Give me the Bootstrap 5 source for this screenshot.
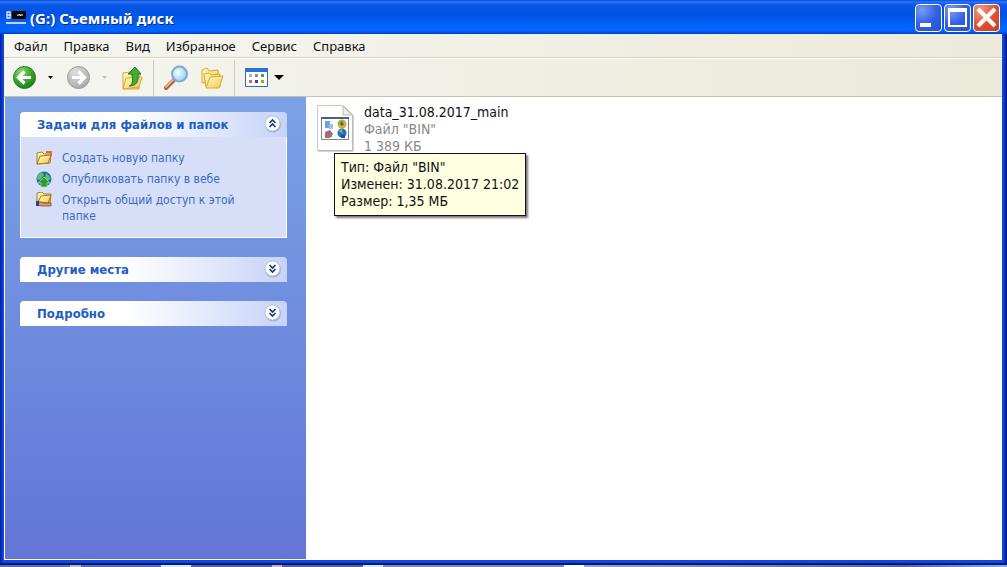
<!DOCTYPE html>
<html lang="ru">
<head>
<meta charset="utf-8">
<meta name="viewport" content="width=device-width, initial-scale=1">
<title>(G:) Съемный диск</title>
<link href="https://cdn.jsdelivr.net/npm/bootstrap@5.3.0/dist/css/bootstrap.min.css" rel="stylesheet">
<style>
body{font-family:"DejaVu Sans Condensed","DejaVu Sans",sans-serif;font-stretch:condensed;font-size:14px;line-height:17px;color:#111;background:linear-gradient(90deg,#646a9c 0 7%,#c4b8b0 7% 8%,#646a9c 8% 16%,#d8e6fa 16% 19%,#625f8b 19% 27%,#c4b8b0 27% 28%,#625f8b 28% 36%,#d8e6fa 36% 38%,#8c84a8 38% 56%,#fff 56% 58%,#a8a0bc 58%,#625f8b 90%,#8caedc)}
button{border:0;padding:0;background:none;color:inherit}
svg{display:block;flex:none}
.window-frame{background:linear-gradient(90deg,#001c9c 0,#1048dc 3px,#1048dc calc(100% - 4px),#001880 100%);border-bottom:2px solid #00188e;padding:0 5px 3px 4px;margin-bottom:2px}
.titlebar{height:34px;margin:0 -5px 0 -4px;padding:2px 7px 0 6px;background:linear-gradient(#0a4bdc 0,#2a76f4 2px,#0855e6 5px,#0054e4 16px,#0263fb 26px,#0366fe 31px,#003ccb 34px)}
.titlebar h1{font:bold 15px/22px "Noto Sans",sans-serif;color:#fff;text-shadow:1px 1px #0a2a8c}
.caption-group{gap:2px}
.caption-btn{width:27px;height:28px;border:1px solid #fff;border-radius:4px;background:radial-gradient(circle at 25% 20%,#7a9cf4,#3460e4 50%,#2450d0)}
.caption-btn.close-win{background:radial-gradient(circle at 25% 20%,#f09a80,#dd5030 55%,#c84020)}
.menubar{height:24px;background:linear-gradient(90deg,#f6f6f2,#eceada);border-bottom:1px solid #d6d2c0;padding-left:10px}
.menubar button{font:13px/22px "Noto Sans",sans-serif}
.toolbar{height:39px;background:linear-gradient(90deg,#f5f5f0,#ebe9d8);border-top:1px solid #fff;border-bottom:1px solid #c5c2b2;padding-left:8px}
.tool-sep{width:1px;height:36px;background:#cfccba;margin:0 9px}
.explorer{min-height:calc(100vh - 104px)}
.tasks{width:302px;background:linear-gradient(#7ba2e7,#6375d6);border-left:1px solid #fff;border-bottom:1px solid #fff;padding:15px 19px 15px 15px}
.task-head{width:100%;height:25px;border-radius:4px 4px 0 0;background:linear-gradient(90deg,#fff 40%,#c6d3f7);color:#215dc6;font-size:13px;font-weight:bold;padding:0 5px 0 17px}
.task-group + .task-group{margin-top:19px}
.task-head svg{margin-bottom:2px}
.task-list{background:#d6dff7;border:1px solid #fff;border-top:0;padding:13px 15px 13px;font-size:12px;line-height:16px}
.task-list a{color:#386ac6}
.files{padding:7px 10px}
.file-entry{gap:10px}
.file-meta{color:#888}
.file-tip{position:absolute;top:49px;left:18px;background:#ffffe1;border:1px solid #111;box-shadow:2px 2px 2px #777;padding:5px 6px;white-space:nowrap;color:#111}
</style>
</head>
<body>
<svg width="0" height="0" class="position-absolute" aria-hidden="true">
<defs>
<radialGradient id="green" cx=".35" cy=".25" r=".8"><stop stop-color="#8cdc78"/><stop offset=".55" stop-color="#3ea52c"/><stop offset="1" stop-color="#1f7c18"/></radialGradient>
<radialGradient id="grey" cx=".35" cy=".25" r=".8"><stop stop-color="#dedede"/><stop offset="1" stop-color="#a9a9a9"/></radialGradient>
<linearGradient id="yellow" x2="1" y2="1"><stop stop-color="#fffbc4"/><stop offset="1" stop-color="#f1ca52"/></linearGradient>
<radialGradient id="glass" cx=".4" cy=".4"><stop stop-color="#fafeff"/><stop offset="1" stop-color="#a5d8f8"/></radialGradient>
<symbol id="disc" viewBox="0 0 18 20"><circle cx="9" cy="10.500" r="8" fill="#7f92c8" opacity=".6"/><circle cx="8.500" cy="9.500" r="7.500" fill="#fff" stroke="#b8c2dc"/></symbol>
<symbol id="chev-down" viewBox="0 0 18 20"><use href="#disc"/><path d="M5.500 6l3 3 3-3M5.500 10l3 3 3-3" fill="none" stroke="#173a78" stroke-width="1.700"/></symbol>
<symbol id="chev-up" viewBox="0 0 18 20"><use href="#disc"/><path d="M5.500 9l3-3 3 3M5.500 13l3-3 3 3" fill="none" stroke="#173a78" stroke-width="1.700"/></symbol>
</defs>
</svg>
<div class="window-frame">
<header class="titlebar d-flex align-items-center">
<svg width="20" height="14" viewBox="0 0 20 14"><path d="M6 0h14v8H6z" fill="#080808"/><path d="M1 1h3v6H1zM1 4h4" fill="none" stroke="#e4ecf8" stroke-width="1.300"/><path d="M11 4h6M13 3l2 2" stroke="#fff"/><path d="M0 11h20v2H0z" fill="#c8d0da"/></svg>
<h1 class="mb-0 ms-1 flex-grow-1">(G:) Съемный диск</h1>
<div class="caption-group d-flex ms-2">
<button class="caption-btn" aria-label="Свернуть"><svg width="25" height="26"><path d="M4 18h11v4H4z" fill="#fff"/></svg></button>
<button class="caption-btn" aria-label="Развернуть"><svg width="25" height="26"><path d="M4 5v16h17V5" fill="none" stroke="#fff" stroke-width="2"/><path d="M3 3h19v4H3z" fill="#fff"/></svg></button>
<button class="caption-btn close-win" aria-label="Закрыть"><svg width="25" height="26"><path d="M4 4l17 17M21 4L4 21" stroke="#fff" stroke-width="4"/></svg></button>
</div>
</header>
<nav class="menubar d-flex align-items-center gap-3" aria-label="Меню">
<button>Файл</button><button>Правка</button><button>Вид</button><button>Избранное</button><button>Сервис</button><button>Справка</button>
</nav>
<div class="toolbar d-flex align-items-center" role="toolbar" aria-label="Инструменты">
<button class="d-flex align-items-center gap-2" aria-label="Назад"><svg width="25" height="25" viewBox="0 0 25 25"><circle cx="12.500" cy="12.500" r="11" fill="url(#green)" stroke="#2e7a2a"/><path d="M19 12.500H7M12.500 6.500l-6 6 6 6" fill="none" stroke="#fff" stroke-width="3.200"/></svg><svg width="13" height="6"><path d="M3 1h5L5.500 4z"/></svg></button>
<button class="d-flex align-items-center gap-2 ms-2" aria-label="Вперед" disabled><svg width="25" height="25" viewBox="0 0 25 25"><circle cx="12.500" cy="12.500" r="11" fill="url(#grey)" stroke="#999"/><path d="M6 12.500h12M12.500 6.500l6 6-6 6" fill="none" stroke="#fff" stroke-width="3.200"/></svg><svg width="13" height="6"><path d="M3 1h5L5.500 4z" fill="#bbb"/></svg></button>
<button class="ms-2" aria-label="Вверх"><svg width="24" height="26" viewBox="0 0 24 26"><path d="M3 24V8l7-1 1 3 9-1-1 15z" fill="url(#yellow)" stroke="#d9a932"/><path d="M3 24l3-11 16-1-3 10z" fill="url(#yellow)" stroke="#d9a932"/><path d="M9 21c4-1 4-6 3-12H8l7-7 6 7h-3c1 7-1 12-9 12z" fill="#42ad34" stroke="#217b1b"/></svg></button>
<div class="tool-sep"></div>
<button aria-label="Поиск"><svg width="26" height="26" viewBox="0 0 26 26"><path d="M11 15l-8 8" stroke="#a8603c" stroke-width="4" stroke-linecap="round"/><path d="M10 15l-7 7" stroke="#e8ad82" stroke-width="2" stroke-linecap="round"/><circle cx="16.500" cy="9" r="7.500" fill="url(#glass)" stroke="#7caad8" stroke-width="2"/></svg></button>
<button class="ms-2 ps-1" aria-label="Папки"><svg width="24" height="24" viewBox="2 0 24 24"><g fill="url(#yellow)" stroke="#d6a936"><path d="M3 17V4l5-2 2 3 9-1v12z"/><path d="M7 21l-2-13 5-1 2 2 9-1v13z"/><path d="M7 22l4-11 13-1-4 12z"/></g></svg></button>
<div class="tool-sep"></div>
<button class="d-flex align-items-center gap-1" aria-label="Вид"><svg width="25" height="21" viewBox="0 0 25 21"><path d="M1.500 1.500h22v18h-22z" fill="#fff" stroke="#286cc4"/><path d="M1 1h23v4H1z" fill="#2474d8"/><path d="M5 7h3v3H5z" fill="#a9b3c0"/><path d="M11 7h3v3h-3z" fill="#6c90c8"/><path d="M17 7h3v3h-3z" fill="#45a83c"/><path d="M5 13h3v3H5z" fill="#e26848"/><path d="M11 13h3v3h-3z" fill="#224c9c"/><path d="M17 13h3v3h-3z" fill="#c99422"/></svg><svg width="12" height="7"><path d="M1 1h10L6 6z"/></svg></button>
</div>
<div class="explorer d-flex bg-white">
<aside class="tasks flex-shrink-0">
<section class="task-group">
<button class="task-head d-flex align-items-center justify-content-between"><span>Задачи для файлов и папок</span><svg width="18" height="20"><use href="#chev-up"/></svg></button>
<div class="task-list d-flex flex-column">
<a href="#" class="d-flex align-items-start text-decoration-none mb-1"><svg class="me-2" width="18" height="17" viewBox="0 0 18 17"><path d="M1 14V3l5-1 2 2h7l-1 9z" fill="url(#yellow)" stroke="#a87a22"/><path d="M1 14l3-8 11-1-3 8z" fill="url(#yellow)" stroke="#a87a22"/><path d="M10 2h5v4" fill="none" stroke="#e46c20" stroke-width="2"/></svg><span>Создать новую папку</span></a>
<a href="#" class="d-flex align-items-start text-decoration-none mb-1"><svg class="me-2" width="18" height="17" viewBox="0 0 18 17"><circle cx="8" cy="8" r="7.500" fill="#2368b8"/><path d="M2 4l4-3 2 3-4 5-3-1zM10 2l5 5-3 3-3-3z" fill="#5bc45b"/><path d="M2 12l6-6 6 6h-3v4H5v-4z" fill="#2c9c2c" stroke="#b5ecaa" stroke-width=".7"/></svg><span>Опубликовать папку в вебе</span></a>
<a href="#" class="d-flex align-items-start text-decoration-none"><svg class="me-2" width="18" height="17" viewBox="0 0 18 17"><path d="M1 11V1l5-1 2 2h7l-1 9z" fill="url(#yellow)" stroke="#a87a22"/><path d="M2 10l3-6 10-1-3 8z" fill="url(#yellow)" stroke="#a87a22"/><path d="M0 10h5l3 1h7v3H6l-6-1z" fill="#dc9866" stroke="#7a3b24" stroke-width=".7"/><path d="M0 9h3v5H0z" fill="#26458f"/></svg><span>Открыть общий доступ к этой папке</span></a>
</div>
</section>
<section class="task-group"><button class="task-head d-flex align-items-center justify-content-between"><span>Другие места</span><svg width="18" height="20"><use href="#chev-down"/></svg></button></section>
<section class="task-group"><button class="task-head d-flex align-items-center justify-content-between"><span>Подробно</span><svg width="18" height="20"><use href="#chev-down"/></svg></button></section>
</aside>
<main class="files flex-grow-1">
<div class="file-entry position-relative d-flex">
<svg width="38" height="48" viewBox="0 0 38 48"><path d="M1.500 1.500h26l9 9v36h-35z" fill="#fff" stroke="#c9c9c9"/><path d="M27 2v9h9z" fill="#eee" stroke="#bbb"/><path d="M37 11v36H2" fill="none" stroke="#aaa"/><path d="M5.500 13.500h27v22h-27z" fill="#fff" stroke="#73849e"/><path d="M5 13h28v2H5z" fill="#4f607c"/><path d="M9 17h5v7H9z" fill="#69a5d8"/><path d="M13 20h4v5h-4z" fill="#9cc2dd"/><circle cx="26" cy="20" r="4.500" fill="#d5ab3d"/><path d="M22 20a4 4 0 0 1 6-3l-2 3z" fill="#6bb04c"/><circle cx="26" cy="20" r="1.500" fill="#555"/><path d="M9 28l5-2 3 4-3 4h-4z" fill="#8d66ac"/><path d="M9 30h5v4H9z" fill="#d35b4b"/><path d="M13 30h3v3h-3z" fill="#5d9e48"/><circle cx="26" cy="29" r="4.500" fill="#286cc0"/><path d="M22 27l4-2 1 5z" fill="#64b868"/><path d="M25 31h4v3h-4z" fill="#1f4f9c"/></svg>
<div><div>data_31.08.2017_main</div><div class="file-meta">Файл "BIN"</div><div class="file-meta">1 389 КБ</div></div>
<div class="file-tip" role="tooltip">Тип: Файл "BIN"<br>Изменен: 31.08.2017 21:02<br>Размер: 1,35 МБ</div>
</div>
</main>
</div>
</div>
<script src="https://cdn.jsdelivr.net/npm/bootstrap@5.3.0/dist/js/bootstrap.bundle.min.js"></script>
</body>
</html>
